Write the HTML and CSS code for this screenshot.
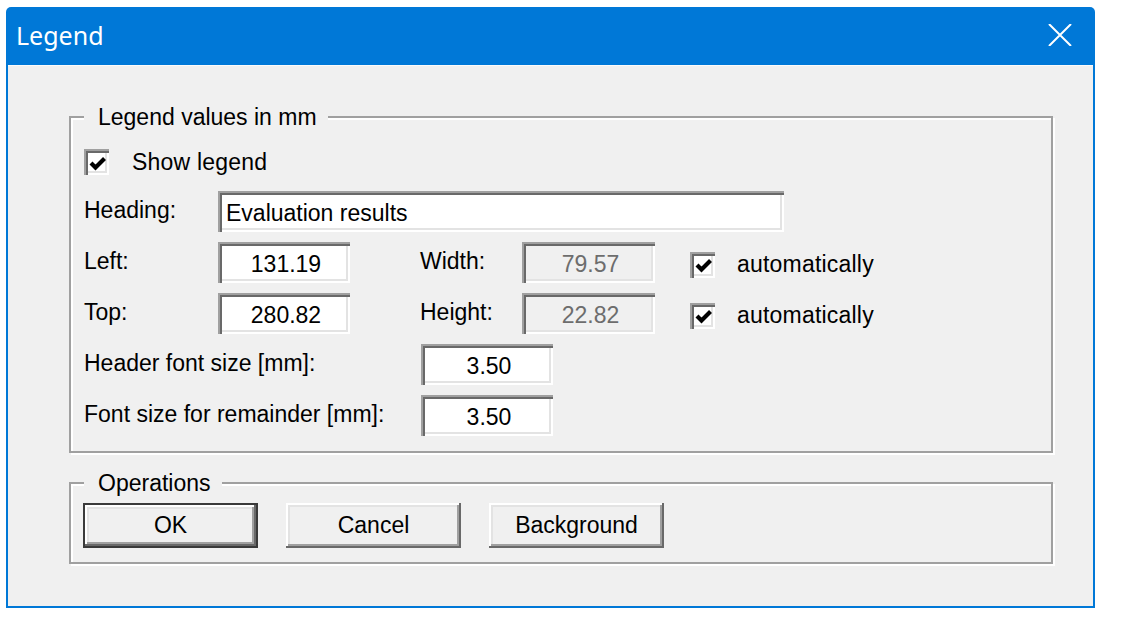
FILE: index.html
```html
<!DOCTYPE html>
<html>
<head>
<meta charset="utf-8">
<link rel="stylesheet" href="styles.css">
</head>
<body>
<div class="window">
  <div class="titlebar">
    <span class="title">Legend</span>
    <svg class="close" width="24" height="22" viewBox="0 0 24 22"><path d="M1 0 L23 22 M23 0 L1 22" stroke="#fff" stroke-width="2" fill="none"/></svg>
  </div>
  <div class="client">
    <div class="group g1">
      <div class="group-title">Legend values in mm</div>
      <div class="row row-check">
        <span class="cb"><svg width="18" height="18" viewBox="0 0 18 18"><path d="M2 8 L6.5 12.5 L15.5 3.5" stroke="#000" stroke-width="4.2" fill="none"/></svg></span>
        <span class="cb-label">Show legend</span>
      </div>
      <div class="row">
        <span class="lbl l-a">Heading:</span>
        <div class="field f-heading">Evaluation results</div>
      </div>
      <div class="row">
        <span class="lbl l-a">Left:</span>
        <div class="field num">131.19</div>
        <span class="lbl l-b">Width:</span>
        <div class="field num disabled">79.57</div>
        <span class="cb cb-auto"><svg width="18" height="18" viewBox="0 0 18 18"><path d="M2 8 L6.5 12.5 L15.5 3.5" stroke="#000" stroke-width="4.2" fill="none"/></svg></span>
        <span class="cb-label">automatically</span>
      </div>
      <div class="row">
        <span class="lbl l-a">Top:</span>
        <div class="field num">280.82</div>
        <span class="lbl l-b">Height:</span>
        <div class="field num disabled">22.82</div>
        <span class="cb cb-auto"><svg width="18" height="18" viewBox="0 0 18 18"><path d="M2 8 L6.5 12.5 L15.5 3.5" stroke="#000" stroke-width="4.2" fill="none"/></svg></span>
        <span class="cb-label">automatically</span>
      </div>
      <div class="row">
        <span class="lbl l-c">Header font size [mm]:</span>
        <div class="field num">3.50</div>
      </div>
      <div class="row">
        <span class="lbl l-c">Font size for remainder [mm]:</span>
        <div class="field num">3.50</div>
      </div>
    </div>
    <div class="group g2">
      <div class="group-title">Operations</div>
      <div class="buttons">
        <div class="btn btn-default">OK</div>
        <div class="btn">Cancel</div>
        <div class="btn">Background</div>
      </div>
    </div>
  </div>
</div>
</body>
</html>
```
FILE: styles.css
```css
html, body {
  margin: 0;
  padding: 0;
  background: #ffffff;
}
body {
  font-family: "Liberation Sans", Arial, sans-serif;
  font-size: 23px;
  color: #000;
}
.window {
  box-sizing: border-box;
  margin: 7px 0 0 6px;
  width: 1089px;
  height: 601px;
  background: #0078d7;
  padding: 0 2px 2px 2px;
  border-radius: 5px 5px 0 0;
  display: flex;
  flex-direction: column;
}
.titlebar {
  height: 58px;
  flex: 0 0 58px;
  display: flex;
  align-items: center;
  justify-content: space-between;
  padding: 0 21px 0 8px;
}
.title {
  font-family: "Noto Sans", "Liberation Sans", sans-serif;
  font-size: 25px;
  color: #fff;
  margin-top: -2px;
}
.close {
  display: block;
  margin-top: -2px;
}
.client {
  flex: 1;
  background: #f0f0f0;
  border-top: 1px solid #fbfbfb;
  padding: 50px 0 0 61px;
}
.group {
  position: relative;
  box-sizing: border-box;
  width: 984px;
  border: 2px solid #a0a0a0;
  box-shadow: inset 2px 2px 0 #fff, 2px 2px 0 #fff;
}
.g1 {
  padding: 31px 0 15px 13px;
}
.g2 {
  margin-top: 29px;
  padding: 19px 0 14px 12px;
}
.group-title {
  position: absolute;
  top: -15px;
  left: 13px;
  height: 28px;
  line-height: 28px;
  padding: 0 11px 0 14px;
  background: #f0f0f0;
}
.row {
  display: flex;
  align-items: center;
  height: 41px;
  margin-top: 10px;
}
.row-check {
  height: 26px;
  margin-top: 0;
}
.row-check + .row {
  margin-top: 16px;
}
.cb {
  box-sizing: border-box;
  width: 25px;
  height: 26px;
  background: #fff;
  box-shadow: inset 2px 2px 0 #a0a0a0, inset 4px 4px 0 #696969, inset -2px -2px 0 #fff, inset -4px -4px 0 #e3e3e3;
  display: flex;
  align-items: center;
  justify-content: center;
  padding: 3px 0 0 3px;
}
.cb svg {
  display: block;
}
.cb-label {
  margin-left: 23px;
  letter-spacing: 0.2px;
}
.cb-auto {
  margin-left: 35px;
  margin-top: 4px;
}
.cb-auto + .cb-label {
  margin-left: 22px;
  margin-top: 4px;
}
.lbl {
  display: block;
  margin-top: -2px;
}
.l-a { width: 134px; }
.l-b { width: 102px; margin-left: 70px; }
.l-c { width: 337px; }
.field {
  box-sizing: border-box;
  height: 41px;
  width: 132px;
  background: #fff;
  box-shadow: inset 2px 2px 0 #a0a0a0, inset 4px 4px 0 #696969, inset -2px -2px 0 #fff, inset -4px -4px 0 #e3e3e3;
  line-height: 41px;
  padding-top: 2px;
  white-space: nowrap;
}
.f-heading {
  width: 566px;
  padding-left: 8px;
}
.num {
  text-align: center;
  padding-left: 4px;
}
.disabled {
  width: 133px;
  background: #f0f0f0;
  color: #6d6d6d;
}
.buttons {
  display: flex;
  gap: 28px;
}
.btn {
  box-sizing: border-box;
  width: 175px;
  height: 45px;
  line-height: 45px;
  text-align: center;
  background: #f0f0f0;
  box-shadow: inset -2px -2px 0 #696969, inset 2px 2px 0 #fff, inset -4px -4px 0 #a0a0a0, inset 4px 4px 0 #e3e3e3;
}
.btn-default {
  border: 2px solid #3a3a3a;
  line-height: 41px;
  box-shadow: inset -2px -2px 0 #696969, inset 2px 2px 0 #fff, inset -4px -4px 0 #a0a0a0, inset 4px 4px 0 #e3e3e3;
}
```
